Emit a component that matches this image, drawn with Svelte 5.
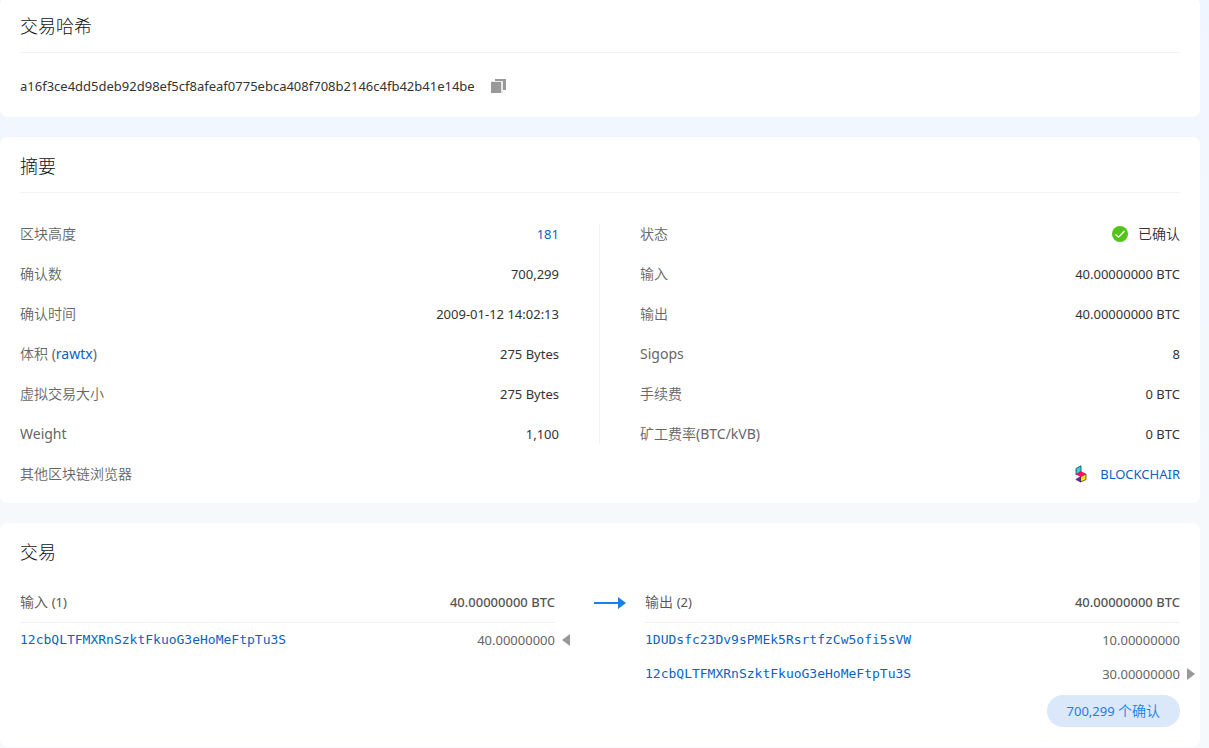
<script>
  const hash = 'a16f3ce4dd5deb92d98ef5cf8afeaf0775ebca408f708b2146c4fb42b41e14be';

  const left = [
    { label: '区块高度', value: '181', link: true },
    { label: '确认数', value: '700,299' },
    { label: '确认时间', value: '2009-01-12 14:02:13' },
    { label: '体积', raw: true, value: '275 Bytes' },
    { label: '虚拟交易大小', value: '275 Bytes' },
    { label: 'Weight', latin: true, value: '1,100' }
  ];

  const right = [
    { label: '状态', value: '已确认', ok: true },
    { label: '输入', value: '40.00000000 BTC' },
    { label: '输出', value: '40.00000000 BTC' },
    { label: 'Sigops', latin: true, value: '8' },
    { label: '手续费', value: '0 BTC' },
    { label: '矿工费率', unit: '(BTC/kVB)', value: '0 BTC' }
  ];

  const inputs = [
    { address: '12cbQLTFMXRnSzktFkuoG3eHoMeFtpTu3S', amount: '40.00000000', mark: 'prev' }
  ];
  const outputs = [
    { address: '1DUDsfc23Dv9sPMEk5RsrtfzCw5ofi5sVW', amount: '10.00000000' },
    { address: '12cbQLTFMXRnSzktFkuoG3eHoMeFtpTu3S', amount: '30.00000000', mark: 'next' }
  ];

  function copyHash() {
    navigator.clipboard?.writeText(hash);
  }
</script>

{#snippet fact(row)}
  <div class="fact">
    <dt class:latin={row.latin}>
      {row.label}{#if row.raw}{' '}<span class="unit">(<a href="#rawtx">rawtx</a>)</span>{/if}{#if row.unit}<span class="unit">{row.unit}</span>{/if}
    </dt>
    <dd class:cjk={row.ok}>
      {#if row.ok}
        <svg class="check" viewBox="0 0 16 16" aria-hidden="true">
          <circle cx="8" cy="8" r="8" fill="#52c41a" />
          <path d="M3.5 8.4 6.6 11.2 12.5 5" fill="none" stroke="#fff" stroke-width="1.3" />
        </svg>
      {/if}
      {#if row.link}<a href="#block">{row.value}</a>{:else}{row.value}{/if}
    </dd>
  </div>
{/snippet}

{#snippet side(name, count, total, rows)}
  <div class="side">
    <div class="side-head">
      <span class="side-name">{name} <span class="count">({count})</span></span>
      <span class="total">{total}</span>
    </div>
    <ul>
      {#each rows as row}
        <li>
          <a class="address" href="#{row.address}">{row.address}</a>
          <span class="amount">{row.amount}</span>
          {#if row.mark}
            <a class="mark" href="#{row.mark}" aria-label={row.mark}>
              <svg viewBox="0 0 8 12" aria-hidden="true">
                <path d={row.mark === 'prev' ? 'M8 0v12L0 6z' : 'M0 0v12l8-6z'} fill="#999" />
              </svg>
            </a>
          {/if}
        </li>
      {/each}
    </ul>
  </div>
{/snippet}

<main>
  <section class="card">
    <h2>交易哈希</h2>
    <div class="hash">
      <span>{hash}</span>
      <button class="copy" aria-label="复制" onclick={copyHash}>
        <svg viewBox="0 0 16 14" aria-hidden="true">
          <path d="M4 0h11v11H4z" fill="#999" />
          <path d="M0 2h12v12H0z" fill="#e8e8e8" />
          <path d="M0 3h10v11H0z" fill="#999" />
        </svg>
      </button>
    </div>
  </section>

  <section class="card">
    <h2>摘要</h2>
    <div class="summary">
      <dl class="first">{#each left as row}{@render fact(row)}{/each}</dl>
      <dl class="second">{#each right as row}{@render fact(row)}{/each}</dl>
    </div>
    <dl class="explorers">
      <div class="fact">
        <dt>其他区块链浏览器</dt>
        <dd>
          <a class="explorer" href="#blockchair">
            <svg class="logo" viewBox="0 0 12 18" aria-hidden="true">
              <path d="M1 3.500 6 .8v6L1 10z" fill="#26d3e0" stroke="#263b42" stroke-width=".8" />
              <path d="M5.500 11.500 11 9v5.500L5.500 17z" fill="#ffe800" stroke="#3b3520" stroke-width=".8" />
              <path d="M.8 14.500 5.500 11.500V17z" fill="#6a22a8" stroke="#40215c" stroke-width=".6" />
              <path d="M1 9.500 5.500 6 11 8.800 6 12z" fill="#ff0b6b" />
            </svg>
            BLOCKCHAIR
          </a>
        </dd>
      </div>
    </dl>
  </section>

  <section class="card">
    <h2 class="plain">交易</h2>
    <div class="transfer">
      {@render side('输入', 1, '40.00000000 BTC', inputs)}
      <svg class="arrow" viewBox="0 0 32 12" aria-hidden="true">
        <path d="M0 5h24V0l8 6-8 6V7H0z" fill="#1a7fe6" />
      </svg>
      {@render side('输出', 2, '40.00000000 BTC', outputs)}
    </div>
    <div class="foot">
      <button class="confirmations">700,299 <span>个确认</span></button>
    </div>
  </section>
</main>

<style>
  :global(body) {
    margin: 0;
    background: linear-gradient(#f0f6ff, #f5f9fc 500px) no-repeat #f5f9fc;
    overflow: hidden;
  }

  main {
    display: flex;
    flex-direction: column;
    gap: 20px;
    margin-top: -3px;
    padding-right: 9px;
    font: 13px/20px 'Noto Sans', 'Noto Sans CJK SC', sans-serif;
    color: #333;
  }

  .card {
    padding: 0 20px;
    border-radius: 8px;
    background: #fff;
  }

  h2 {
    margin: 0;
    padding: 16px 0 13px;
    border-bottom: 1px solid #f0f3f7;
    font-size: 18px;
    line-height: 26px;
    font-weight: 300;
    color: #111;
  }

  h2.plain {
    border-bottom: 0;
  }

  a {
    color: #0b63c4;
    text-decoration: none;
  }

  dl,
  dd,
  ul {
    margin: 0;
    padding: 0;
  }

  button {
    border: 0;
    padding: 0;
    font: inherit;
    cursor: pointer;
  }

  svg {
    display: block;
    flex: none;
  }

  .hash {
    display: flex;
    align-items: center;
    gap: 16px;
    height: 64px;
    padding-top: 2px;
    box-sizing: border-box;
  }

  .copy {
    background: none;
  }

  .copy svg {
    width: 16px;
    height: 14px;
  }

  .summary {
    display: grid;
    grid-template-columns: 1fr 1fr;
    padding-top: 31px;
  }

  .first {
    padding-right: 40px;
    border-right: 1px solid #f0f3f7;
  }

  .second {
    padding-left: 40px;
  }

  .first,
  .second {
    display: grid;
    gap: 20px;
  }

  .explorers {
    padding: 20px 0 19px;
  }

  .fact {
    display: flex;
    justify-content: space-between;
    height: 20px;
  }

  dt {
    font-size: 14px;
    font-weight: 350;
    color: #666;
  }

  dt.latin,
  .unit {
    font-weight: 400;
  }

  dd {
    display: flex;
    align-items: center;
  }

  dd.cjk {
    gap: 10px;
    font-size: 14px;
    font-weight: 350;
  }

  .check {
    width: 16px;
    height: 16px;
  }

  .explorer {
    display: flex;
    align-items: center;
    gap: 13px;
  }

  .logo {
    width: 12px;
    height: 18px;
  }

  .transfer {
    display: grid;
    grid-template-columns: 1fr 90px 1fr;
  }

  .arrow {
    width: 32px;
    height: 12px;
    margin: 19px 0 0 39px;
  }

  .side-head {
    display: flex;
    justify-content: space-between;
    align-items: center;
    height: 45px;
    padding-top: 3px;
    box-sizing: border-box;
    border-bottom: 1px solid #f0f0f0;
    color: #555;
  }

  .side-name {
    font-size: 14px;
    font-weight: 350;
  }

  .count {
    font-size: 13px;
    font-weight: 400;
  }

  .total {
    font-weight: 500;
  }

  li {
    position: relative;
    display: flex;
    justify-content: space-between;
    align-items: center;
    height: 34px;
  }

  .address {
    font-family: 'DejaVu Sans Mono', monospace;
  }

  .amount {
    color: #666;
  }

  .mark {
    position: absolute;
    left: 100%;
    margin-left: 7px;
  }

  .mark svg {
    width: 8px;
    height: 12px;
  }

  .foot {
    display: flex;
    justify-content: flex-end;
    padding: 4px 0 20px;
  }

  .confirmations {
    height: 32px;
    padding: 0 20px;
    border-radius: 16px;
    background: #dae8f9;
    color: #1a7fe6;
  }

  .confirmations span {
    font-size: 14px;
    font-weight: 350;
  }
</style>
